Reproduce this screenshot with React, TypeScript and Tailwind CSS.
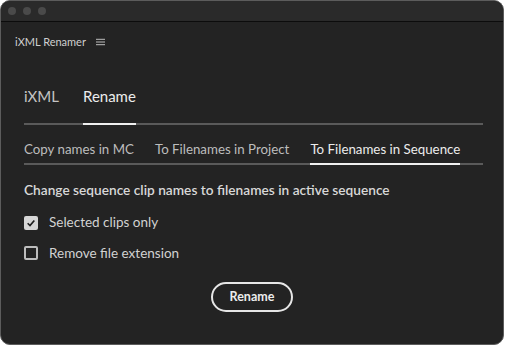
import React, { useState } from "react";

const font = { fontFamily: "Lato, 'Noto Sans', sans-serif" };

const Checkbox = ({ checked, label, onToggle }: { checked: boolean; label: string; onToggle: () => void }) => (
  <label onClick={onToggle} className="flex items-center gap-[11px] cursor-pointer">
    <span
      className={`w-[14px] h-[14px] rounded-[2px] flex items-center justify-center ${
        checked ? "bg-[#d6d6d6]" : "border-2 border-[#bdbdbd]"
      }`}
    >
      {checked && (
        <svg viewBox="0 0 12 12" className="w-[10px] h-[10px]">
          <path d="M2 6.3 L4.8 9 L10 3" fill="none" stroke="#1e1e1e" strokeWidth="2" />
        </svg>
      )}
    </span>
    <span className="text-[13.5px] text-[#d2d2d2]">{label}</span>
  </label>
);

export default function App() {
  const [tab, setTab] = useState("Rename");
  const [sub, setSub] = useState("To Filenames in Sequence");
  const [selected, setSelected] = useState(true);
  const [removeExt, setRemoveExt] = useState(false);

  return (
    <div className="w-[506px] h-[348px] bg-white" style={font}>
      <div className="w-[504px] h-[345px] rounded-[10px] border border-[#5c5c5c] bg-[#232323] overflow-hidden flex flex-col">
        {/* Title bar */}
        <div className="h-[21px] bg-[#2a2a2a] border-b border-[#0c0c0c] flex items-center gap-[7px] pl-[7px] shrink-0">
          <span className="w-[8px] h-[8px] rounded-full bg-[#4a4a4a]" />
          <span className="w-[8px] h-[8px] rounded-full bg-[#4a4a4a]" />
          <span className="w-[8px] h-[8px] rounded-full bg-[#4a4a4a]" />
        </div>

        {/* Panel header */}
        <div className="flex items-center gap-[10px] px-[14px] pt-[12px] text-[11px] text-[#cfcfcf]">
          <span>iXML Renamer</span>
          <svg viewBox="0 0 10 8" className="w-[9px] h-[8px]">
            <path d="M0 1H10M0 4H10M0 7H10" stroke="#cfcfcf" strokeWidth="1" />
          </svg>
        </div>

        <div className="px-[23px] pt-[34px] flex flex-col">
          {/* Main tabs */}
          <div className="flex border-b-2 border-[#5a5a5a] w-[459px]">
            {["iXML", "Rename"].map((t) => (
              <button
                key={t}
                onClick={() => setTab(t)}
                className={`text-[15px] pb-[16px] -mb-[2px] mr-[24px] border-b-2 ${
                  tab === t ? "text-[#ececec] border-[#f0f0f0]" : "text-[#c4c4c4] border-transparent"
                }`}
              >
                {t}
              </button>
            ))}
          </div>

          {/* Sub tabs */}
          <div className="flex border-b-2 border-[#5a5a5a] w-[459px] mt-[15px]">
            {["Copy names in MC", "To Filenames in Project", "To Filenames in Sequence"].map((t) => (
              <button
                key={t}
                onClick={() => setSub(t)}
                className={`shrink-0 whitespace-nowrap text-[13.3px] pb-[3px] -mb-[2px] mr-[21px] last:mr-0 border-b-2 ${
                  sub === t ? "text-[#ececec] border-[#f0f0f0]" : "text-[#bdbdbd] border-transparent"
                }`}
              >
                {t}
              </button>
            ))}
          </div>

          <p className="mt-[15px] text-[13.7px] font-semibold text-[#d8d8d8]">
            Change sequence clip names to filenames in active sequence
          </p>

          <div className="mt-[12px] flex flex-col gap-[10px]">
            <Checkbox checked={selected} label="Selected clips only" onToggle={() => setSelected(!selected)} />
            <Checkbox checked={removeExt} label="Remove file extension" onToggle={() => setRemoveExt(!removeExt)} />
          </div>

          <div className="flex justify-center mt-[19px]">
            <button className="w-[82px] h-[30px] rounded-full border-2 border-[#e6e6e6] text-[12.5px] font-bold text-[#ececec]">
              Rename
            </button>
          </div>
        </div>
      </div>
    </div>
  );
}
